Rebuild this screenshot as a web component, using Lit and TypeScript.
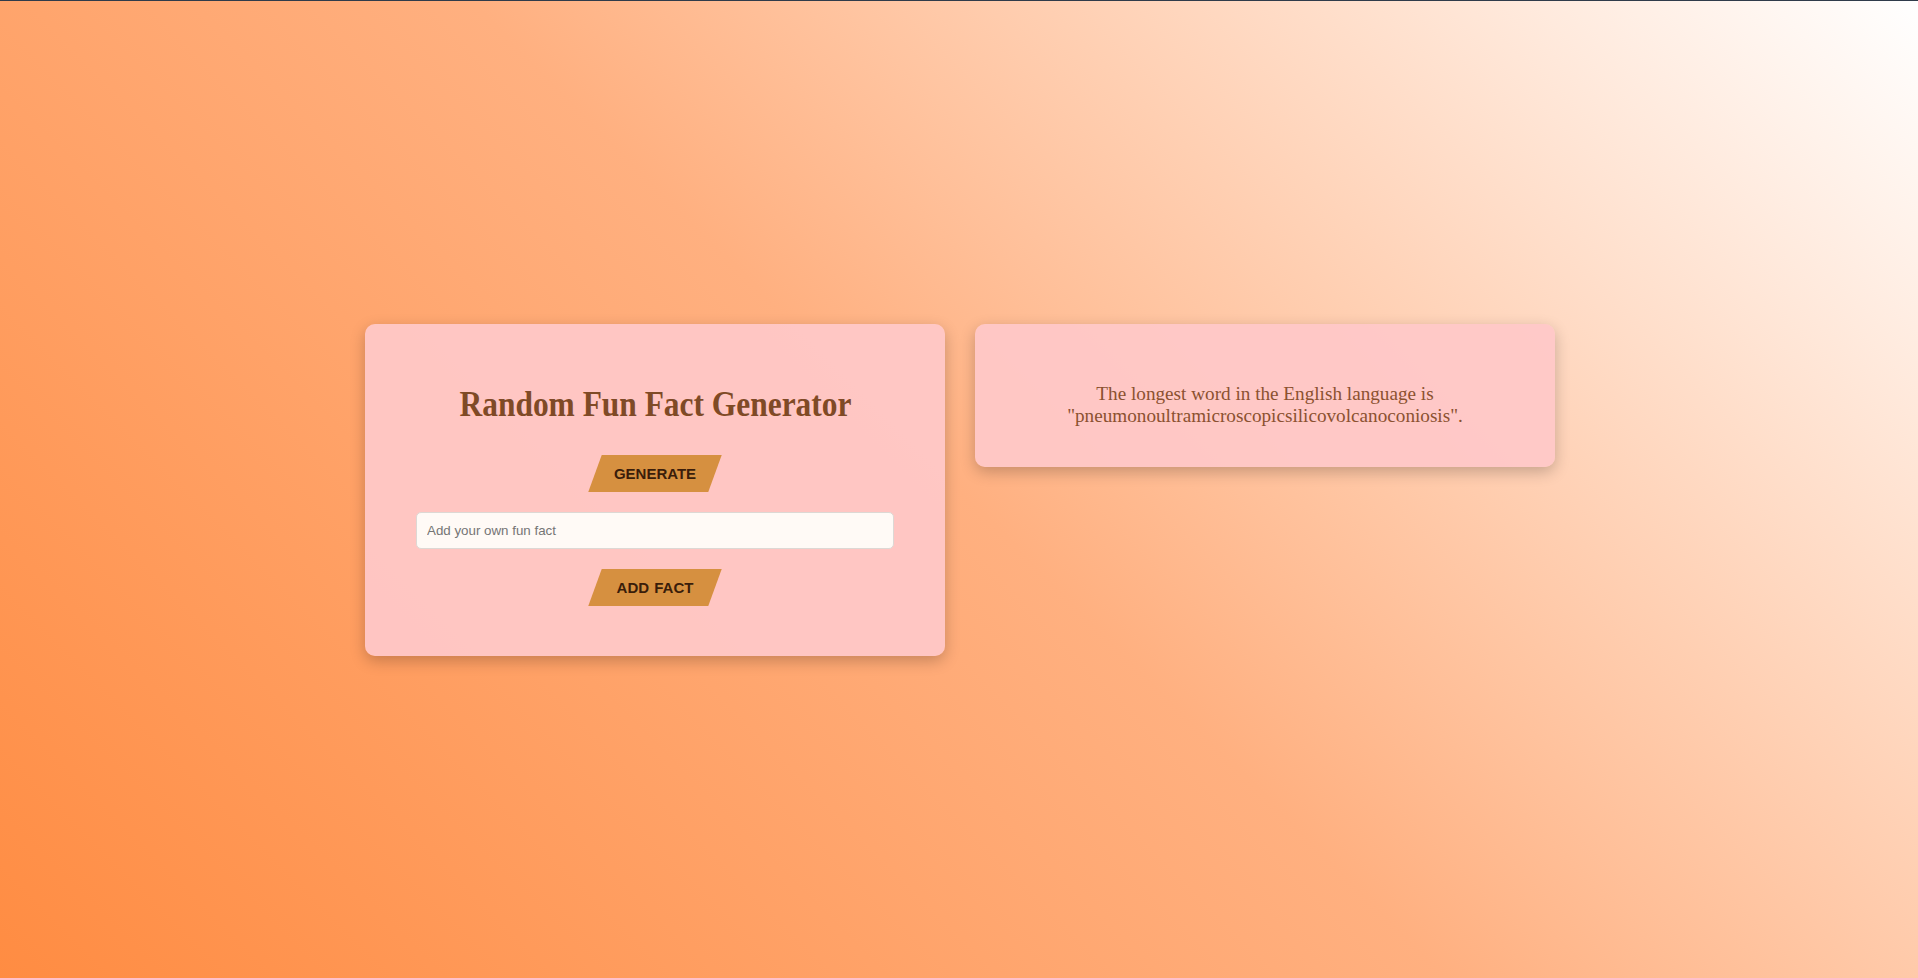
import { LitElement, html, css } from "lit";
import { customElement } from "lit/decorators.js";

@customElement("app-root")
export class AppRoot extends LitElement {
  static styles = css`
    :host {
      display: flex;
      flex-direction: column;
      min-height: 100vh;
      box-sizing: border-box;
      border-top: 1px solid #2f3b4a;
      background: linear-gradient(45deg, #ff8c42, #ffb080 50%, #ffffff);
      font-family: "Liberation Serif", "Times New Roman", serif;
    }
    .stage {
      flex: 1;
      display: flex;
      justify-content: center;
      align-items: flex-start;
      gap: 30px;
      padding: 323px 0 0 2px;
    }
    .card {
      box-sizing: border-box;
      width: 580px;
      padding: 50px;
      border-radius: 10px;
      background: rgba(255, 200, 200, 0.94);
      box-shadow: 0 5px 15px rgba(0, 0, 0, 0.22);
      display: flex;
      flex-direction: column;
      align-items: center;
    }
    .fact {
      padding: 59px 50px 40px;
    }
    h1 {
      margin: 0 0 21px;
      font-family: "Liberation Serif", serif;
      font-size: 36px;
      font-weight: 700;
      line-height: 60px;
      color: #7f4a26;
      white-space: nowrap;
      transform: scaleX(0.873);
    }
    .btn {
      position: relative;
      z-index: 0;
      width: 120px;
      height: 37px;
      border: 0;
      padding: 0;
      background: transparent;
      font-family: "Liberation Sans", Arial, sans-serif;
      font-size: 15px;
      font-weight: 700;
      word-spacing: 1px;
      color: #3a1d0a;
    }
    .btn::before {
      content: "";
      position: absolute;
      inset: 0;
      z-index: -1;
      background: #d69040;
      transform: skewX(-20deg);
    }
    input {
      box-sizing: border-box;
      width: 478px;
      height: 37px;
      margin: 20px 0;
      padding: 0 10px;
      border: 1px solid #ddd8d4;
      border-radius: 5px;
      background: #fffaf6;
      font-family: "Liberation Sans", Arial, sans-serif;
      font-size: 13.33px;
      outline: none;
    }
    p {
      margin: 0;
      font-size: 19.2px;
      line-height: 22px;
      text-align: center;
      color: #8b5130;
    }
  `;

  render() {
    return html`
      <main class="stage">
        <section class="card">
          <h1>Random Fun Fact Generator</h1>
          <button class="btn">GENERATE</button>
          <input type="text" placeholder="Add your own fun fact" />
          <button class="btn">ADD FACT</button>
        </section>
        <section class="card fact">
          <p>The longest word in the English language is "pneumonoultramicroscopicsilicovolcanoconiosis".</p>
        </section>
      </main>
    `;
  }
}
